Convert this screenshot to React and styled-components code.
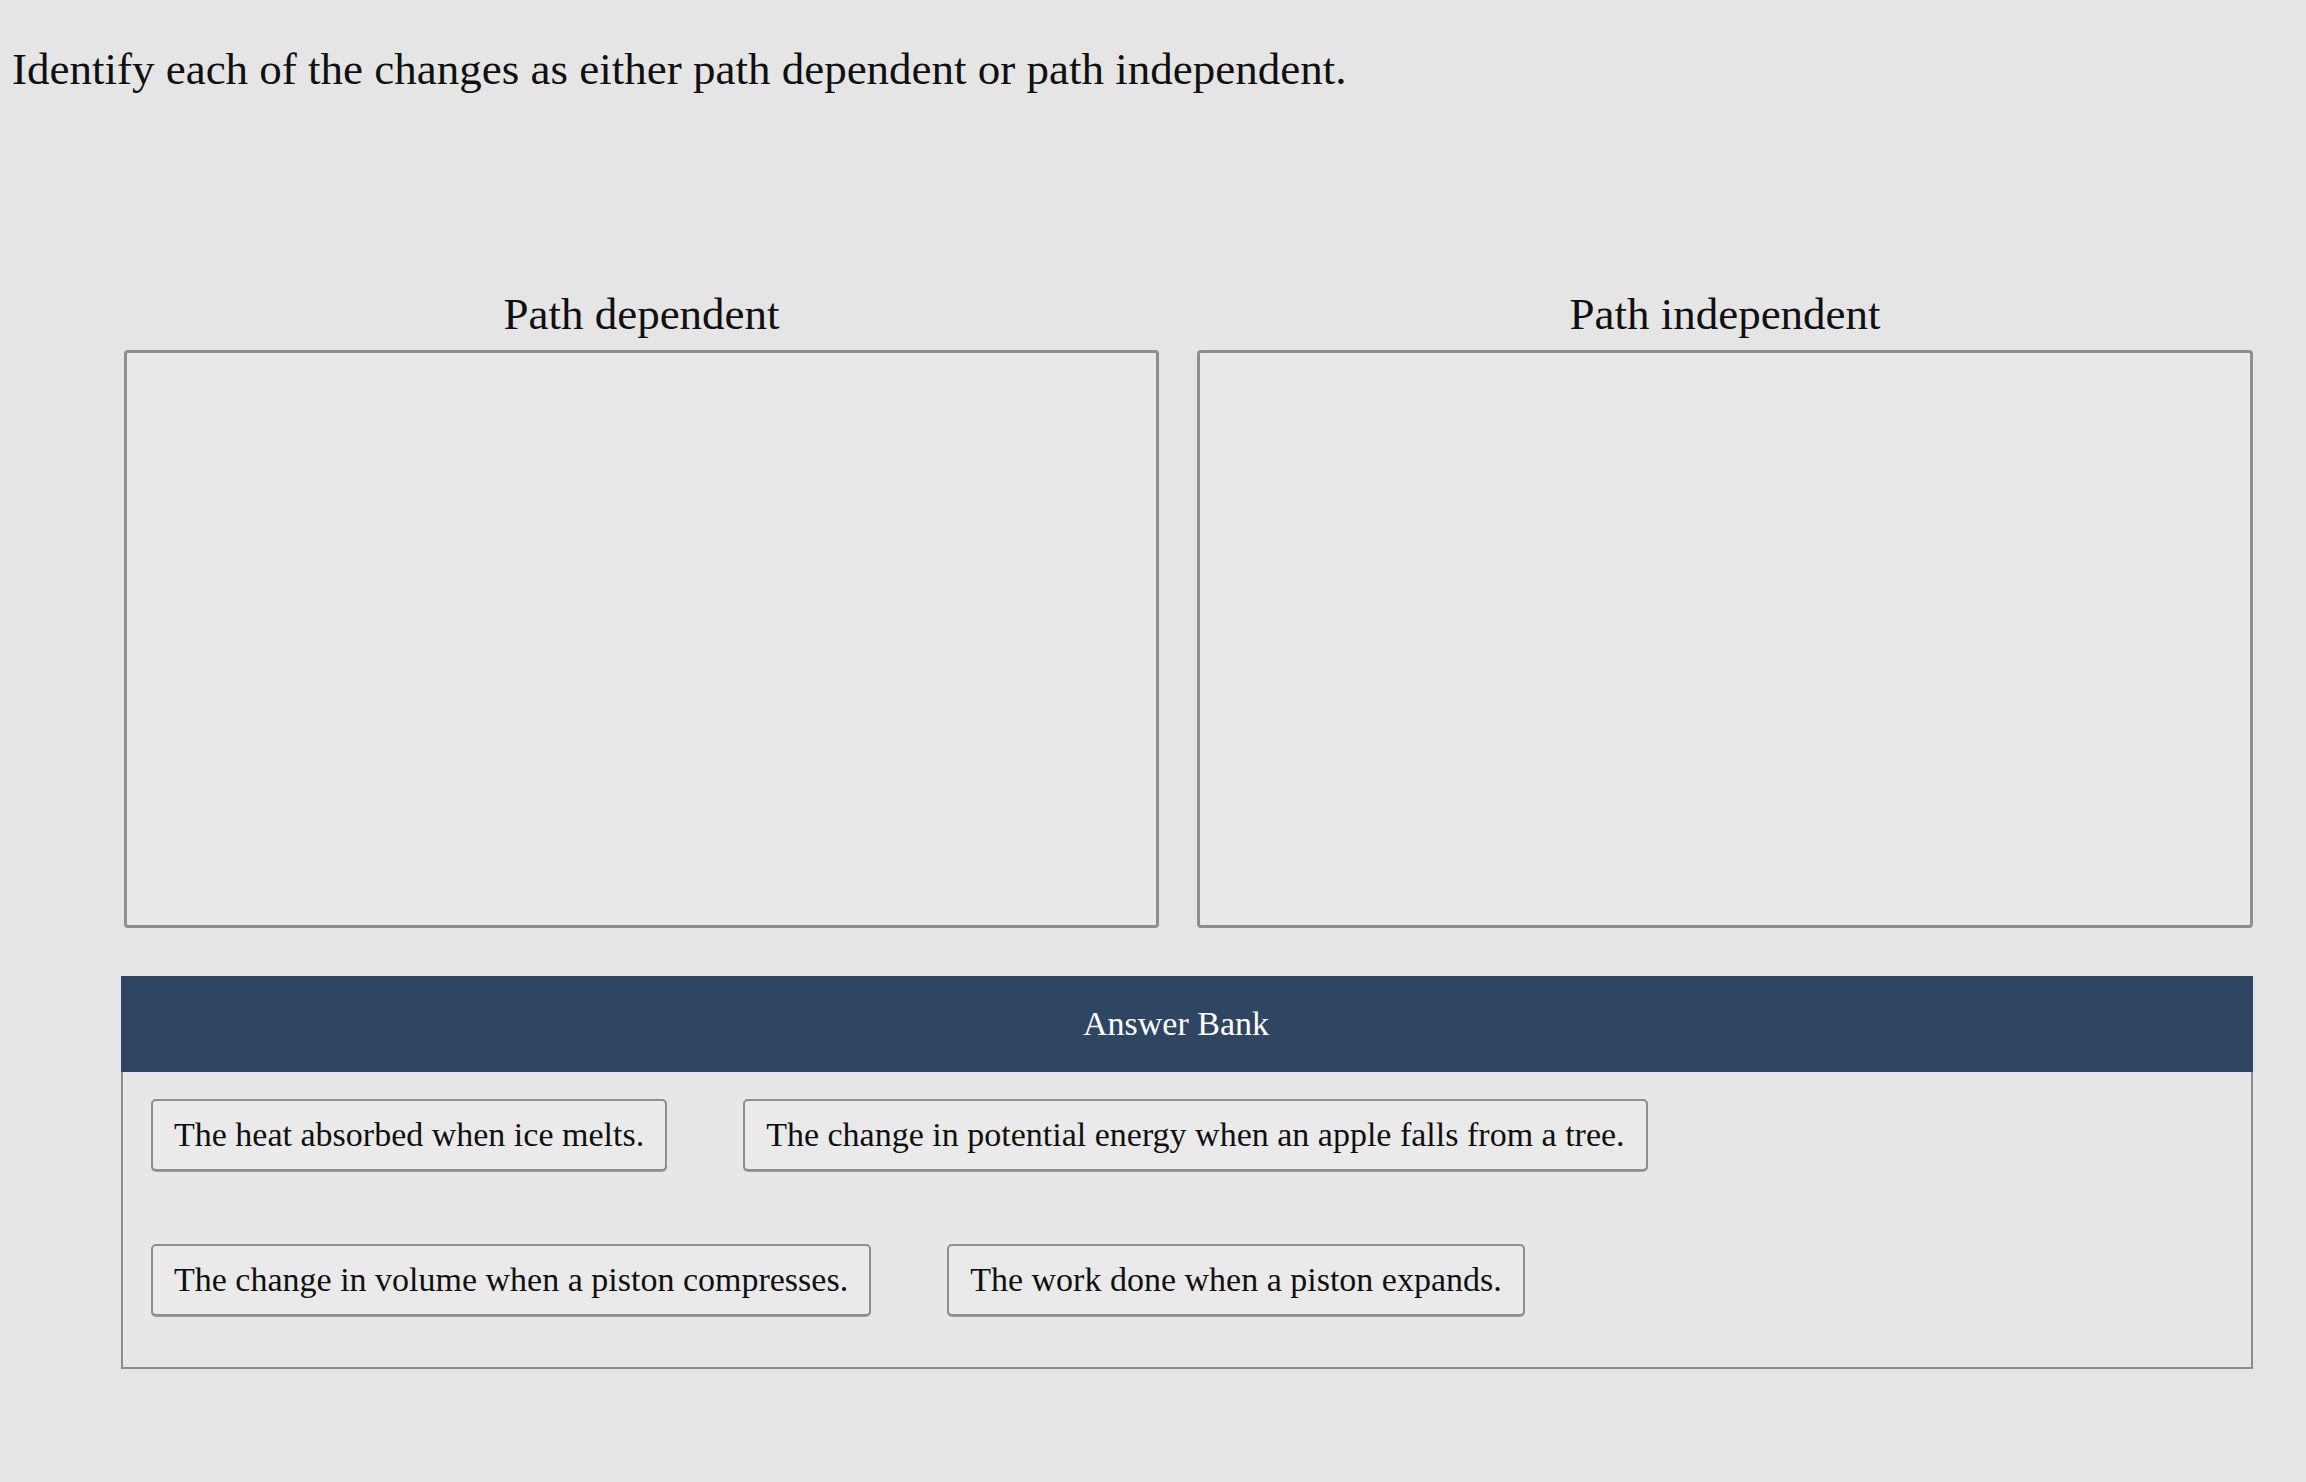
import React from 'react';
import styled, { createGlobalStyle } from 'styled-components';

const GlobalStyle = createGlobalStyle`
  html, body {
    margin: 0;
    padding: 0;
    background: #e5e5e5;
  }
  body {
    font-family: "Liberation Serif", "Times New Roman", serif;
    color: #101010;
  }
`;

const Page = styled.div`
  min-height: 1482px;
  padding-top: 42px;
  box-sizing: border-box;
`;

const Prompt = styled.h1`
  margin: 0 0 0 12px;
  font-size: 45px;
  line-height: 54px;
  font-weight: normal;
`;

const Board = styled.div`
  width: 2132px;
  margin-left: 121px;
`;

const Columns = styled.div`
  display: grid;
  grid-template-columns: 1035px 1056px;
  column-gap: 38px;
  margin: 192px 0 0 3px;
`;

const Column = styled.div`
  display: flex;
  flex-direction: column;
`;

const ColumnTitle = styled.h2`
  margin: 0 0 10px;
  text-align: center;
  font-size: 45px;
  line-height: 52px;
  font-weight: normal;
`;

const DropZone = styled.div`
  height: 578px;
  box-sizing: border-box;
  border: 3px solid #8e8e8e;
  border-radius: 4px;
  background: #e9e9e9;
`;

const Bank = styled.section`
  margin-top: 48px;
`;

const BankHeader = styled.div`
  height: 96px;
  display: flex;
  align-items: center;
  justify-content: center;
  padding-right: 22px;
  background: #2e4662;
  color: #ffffff;
  font-size: 34px;
`;

const BankBody = styled.div`
  display: flex;
  flex-wrap: wrap;
  row-gap: 73px;
  column-gap: 76px;
  align-content: flex-start;
  padding: 27px 28px 51px;
  border: 2px solid #8c8c8c;
  border-top: none;
  background: #e7e7e7;
`;

const Chip = styled.div`
  height: 72px;
  display: flex;
  align-items: center;
  box-sizing: border-box;
  padding: 0 21px;
  border: 2px solid #8e8e8e;
  border-radius: 5px;
  background: #eaeaea;
  box-shadow: 0 1px 0 #a0a0a0;
  font-size: 34px;
  white-space: nowrap;
`;

const answers = [
  'The heat absorbed when ice melts.',
  'The change in potential energy when an apple falls from a tree.',
  'The change in volume when a piston compresses.',
  'The work done when a piston expands.',
];

export default function App() {
  return (
    <>
      <GlobalStyle />
      <Page>
        <Prompt>Identify each of the changes as either path dependent or path independent.</Prompt>
        <Board>
          <Columns>
            <Column>
              <ColumnTitle>Path dependent</ColumnTitle>
              <DropZone />
            </Column>
            <Column>
              <ColumnTitle>Path independent</ColumnTitle>
              <DropZone />
            </Column>
          </Columns>
          <Bank>
            <BankHeader>Answer Bank</BankHeader>
            <BankBody>
              {answers.map(text => (
                <Chip key={text}>{text}</Chip>
              ))}
            </BankBody>
          </Bank>
        </Board>
      </Page>
    </>
  );
}
